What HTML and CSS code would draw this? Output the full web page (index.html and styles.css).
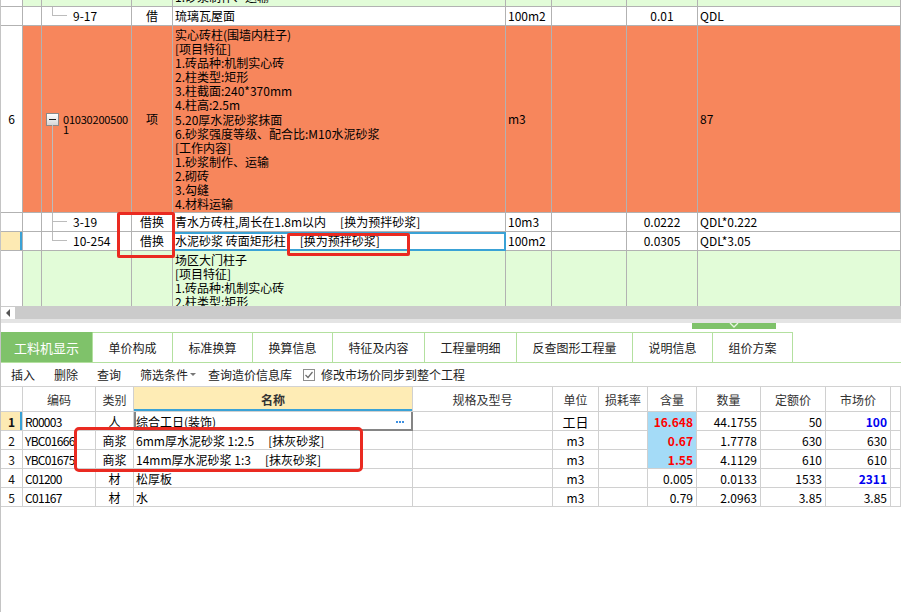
FILE: index.html
```html
<!DOCTYPE html>
<html lang="zh-CN">
<head>
<meta charset="utf-8">
<title>工料机显示</title>
<link rel="stylesheet" href="styles.css">
</head>
<body>
<div class="app">
  <div class="tree-grid">
    <div class="row r-top green">
      <div class="c c-no"></div><div class="c"></div><div class="c c-code"></div><div class="c c-type"></div><div class="c c-name">1.砂浆制作、运输</div><div class="c"></div><div class="c"></div><div class="c"></div><div class="c"></div>
    </div>
    <div class="row r-1 white">
      <div class="c c-no"></div><div class="c"></div><div class="c c-code child"><span class="elbow"></span>9-17</div><div class="c c-type">借</div><div class="c c-name">琉璃瓦屋面</div><div class="c c-unit">100m2</div><div class="c"></div><div class="c c-qty">0.01</div><div class="c c-expr">QDL</div>
    </div>
    <div class="row r-big orange">
      <div class="c c-no">6</div><div class="c"></div>
      <div class="c c-code parent"><span class="vdown"></span><span class="expand"><span class="minus"></span></span><span class="code2">01030200500<br>1</span></div>
      <div class="c c-type">项</div>
      <div class="c c-name multi">实心砖柱(围墙内柱子)<br>[项目特征]<br>1.砖品种:机制实心砖<br>2.柱类型:矩形<br>3.柱截面:240*370mm<br>4.柱高:2.5m<br>5.20厚水泥砂浆抹面<br>6.砂浆强度等级、配合比:M10水泥砂浆<br>[工作内容]<br>1.砂浆制作、运输<br>2.砌砖<br>3.勾缝<br>4.材料运输</div>
      <div class="c c-unit">m3</div><div class="c"></div><div class="c"></div><div class="c c-expr">87</div>
    </div>
    <div class="row r-1 white">
      <div class="c c-no"></div><div class="c"></div><div class="c c-code child"><span class="vfull"></span><span class="elbow"></span>3-19</div><div class="c c-type">借换</div><div class="c c-name">青水方砖柱,周长在1.8m以内<span class="gap"></span>[换为预拌砂浆]</div><div class="c c-unit">10m3</div><div class="c"></div><div class="c c-qty">0.0222</div><div class="c c-expr">QDL*0.222</div>
    </div>
    <div class="row r-1 white">
      <div class="c c-no sel-no"></div><div class="c"></div><div class="c c-code child"><span class="elbow"></span>10-254</div><div class="c c-type">借换</div><div class="c c-name sel-cell">水泥砂浆 砖面矩形柱<span class="gap"></span>[换为预拌砂浆]</div><div class="c c-unit">100m2</div><div class="c"></div><div class="c c-qty">0.0305</div><div class="c c-expr">QDL*3.05</div>
    </div>
    <div class="row r-green green">
      <div class="c c-no"></div><div class="c"></div><div class="c c-code"></div><div class="c c-type"></div>
      <div class="c c-name multi">场区大门柱子<br>[项目特征]<br>1.砖品种:机制实心砖<br>2.柱类型:矩形<br>3.柱截面:240*370mm</div>
      <div class="c"></div><div class="c"></div><div class="c"></div><div class="c"></div>
    </div>
  </div>

  <div class="hscroll"><span class="arrow-btn"><span class="tri"></span></span></div>
  <div class="splitter">
    <div class="split-band"></div>
    <div class="handle"><svg width="10" height="6" viewBox="0 0 10 6"><polyline points="1,1 5,5 9,1" fill="none" stroke="#e8f5e2" stroke-width="1.3"/></svg></div>
  </div>

  <div class="tabs">
    <div class="tab active w93">工料机显示</div>
    <div class="tab w80">单价构成</div>
    <div class="tab w80">标准换算</div>
    <div class="tab w80">换算信息</div>
    <div class="tab w92">特征及内容</div>
    <div class="tab w92">工程量明细</div>
    <div class="tab w116">反查图形工程量</div>
    <div class="tab w80">说明信息</div>
    <div class="tab w80">组价方案</div>
  </div>

  <div class="toolbar">
    <span class="tool">插入</span>
    <span class="tool">删除</span>
    <span class="tool">查询</span>
    <span class="tool dd">筛选条件<span class="caret"></span></span>
    <span class="tool">查询造价信息库</span>
    <span class="tool chk"><span class="box"><svg width="10" height="10" viewBox="0 0 10 10"><polyline points="1.5,5 4,7.5 8.5,2" fill="none" stroke="#6b6b6b" stroke-width="1.2"/></svg></span>修改市场价同步到整个工程</span>
  </div>

  <div class="lower">
    <div class="lrow lhead">
      <div class="lc"></div><div class="lc ctr">编码</div><div class="lc ctr">类别</div><div class="lc ctr h-name">名称</div><div class="lc ctr">规格及型号</div><div class="lc ctr">单位</div><div class="lc ctr">损耗率</div><div class="lc ctr">含量</div><div class="lc ctr">数量</div><div class="lc ctr">定额价</div><div class="lc ctr">市场价</div><div class="lc"></div>
    </div>
    <div class="lrow">
      <div class="lc ctr num sel-no b">1</div><div class="lc pl code">R00003</div><div class="lc ctr">人</div><div class="lc pl name-sel"><span>综合工日(装饰)</span><svg class="dots" width="8" height="2" viewBox="0 0 8 2"><rect x="0" y="0" width="2" height="2" fill="#3d8fe0"/><rect x="3" y="0" width="2" height="2" fill="#3d8fe0"/><rect x="6" y="0" width="2" height="2" fill="#3d8fe0"/></svg></div><div class="lc"></div><div class="lc ctr sans">工日</div><div class="lc"></div><div class="lc rt hl red b">16.648</div><div class="lc rt">44.1755</div><div class="lc rt">50</div><div class="lc rt blue b">100</div><div class="lc"></div>
    </div>
    <div class="lrow">
      <div class="lc ctr num">2</div><div class="lc pl code">YBC01666</div><div class="lc ctr">商浆</div><div class="lc pl">6mm厚水泥砂浆 1:2.5<span class="gap"></span>[抹灰砂浆]</div><div class="lc"></div><div class="lc ctr">m3</div><div class="lc"></div><div class="lc rt hl red b">0.67</div><div class="lc rt">1.7778</div><div class="lc rt">630</div><div class="lc rt">630</div><div class="lc"></div>
    </div>
    <div class="lrow">
      <div class="lc ctr num">3</div><div class="lc pl code">YBC01675</div><div class="lc ctr">商浆</div><div class="lc pl">14mm厚水泥砂浆 1:3<span class="gap"></span>[抹灰砂浆]</div><div class="lc"></div><div class="lc ctr">m3</div><div class="lc"></div><div class="lc rt hl hl-last red b">1.55</div><div class="lc rt">4.1129</div><div class="lc rt">610</div><div class="lc rt">610</div><div class="lc"></div>
    </div>
    <div class="lrow">
      <div class="lc ctr num">4</div><div class="lc pl code">C01200</div><div class="lc ctr">材</div><div class="lc pl">松厚板</div><div class="lc"></div><div class="lc ctr">m3</div><div class="lc"></div><div class="lc rt">0.005</div><div class="lc rt">0.0133</div><div class="lc rt">1533</div><div class="lc rt blue b">2311</div><div class="lc"></div>
    </div>
    <div class="lrow">
      <div class="lc ctr num">5</div><div class="lc pl code">C01167</div><div class="lc ctr">材</div><div class="lc pl">水</div><div class="lc"></div><div class="lc ctr">m3</div><div class="lc"></div><div class="lc rt">0.79</div><div class="lc rt">2.0963</div><div class="lc rt">3.85</div><div class="lc rt">3.85</div><div class="lc"></div>
    </div>
  </div>

  <div class="mark mark-a"></div>
  <div class="mark mark-b"></div>
  <div class="mark mark-c"></div>
</div>
</body>
</html>
```

FILE: styles.css
```css
* { box-sizing: border-box; }
html, body { margin: 0; padding: 0; background: #fff; }
body {
  font-family: "Noto Sans CJK SC", "Noto Sans", sans-serif;
  font-size: 12px;
  color: #000;
}
.app {
  position: relative;
  width: 901px;
  height: 612px;
  overflow: hidden;
  border-left: 1px solid #c4c4c4;
  display: flex;
  flex-direction: column;
}

/* ---------- upper tree grid ---------- */
.tree-grid { height: 306px; overflow: hidden; flex: none; }
.row {
  display: grid;
  grid-template-columns: 22px 19px 90px 41px 333px 46px 75px 71px 203px;
}
.c {
  position: relative;
  display: flex;
  align-items: center;
  white-space: nowrap;
  overflow: hidden;
  border-right: 1px solid #b2b2b2;
  border-bottom: 1px solid #b2b2b2;
  line-height: 14px;
}
.green .c { background: #e2fcd8; }
.orange .c { background: #f7865c; }
.white .c { background: #fff; }
.row .c-no { background: #fff; justify-content: center; }
.r-top { height: 20px; margin-top: -13px; }
.r-1 { height: 19px; }
.r-big { height: 187px; }
.r-green { height: 80px; }
.c-type { justify-content: center; }
.c-name { padding-left: 2px; }
.c-name.multi { display: block; padding-top: 2px; white-space: normal; line-height: 14.1px; }
.c-unit { padding-left: 2px; }
.c-qty { justify-content: center; }
.c-expr { padding-left: 2px; }
.gap { display: inline-block; width: 14px; }

.c-code.child { padding-left: 31px; }
.c-code.parent { padding-left: 4px; }
.elbow {
  position: absolute; left: 10px; top: 0;
  width: 15px; height: 50%;
  border-left: 1px solid #bcbcbc;
  border-bottom: 1px solid #bcbcbc;
}
.vfull { position: absolute; left: 10px; top: 0; bottom: 0; border-left: 1px solid #bcbcbc; }
.vdown { position: absolute; left: 10px; top: calc(50% + 6px); bottom: 0; border-left: 1px solid #bcbcbc; }
.expand {
  flex: none;
  width: 13px; height: 13px;
  border: 1px solid #8a8a8a;
  background: linear-gradient(#ffffff, #d6d6d6);
  display: flex; align-items: center; justify-content: center;
  margin-right: 4px;
}
.minus { width: 7px; height: 1px; background: #202020; }
.code2 { font-size: 11px; line-height: 10px; margin-top: 10px; letter-spacing: -0.2px; }

.sel-no { background: #fdeab3 !important; box-shadow: inset -2px 0 0 #3aa2d6; }
.sel-cell { outline: 2px solid #3aa2d6; outline-offset: -2px; }

/* ---------- scrollbar & splitter ---------- */
.hscroll { height: 13px; flex: none; background: #cbcbcb; display: flex; align-items: flex-end; }
.arrow-btn {
  width: 14px; height: 12px; background: #fff;
  display: flex; align-items: center; justify-content: center;
}
.tri {
  width: 0; height: 0;
  border-top: 4px solid transparent;
  border-bottom: 4px solid transparent;
  border-right: 4px solid #555;
}
.splitter { height: 13px; flex: none; }
.split-band { height: 4px; background: #e4e4e4; }
.handle {
  margin-left: 691px; width: 84px; height: 6px;
  background: #7fc26a;
  display: flex; justify-content: center; align-items: flex-start;
}
.handle svg { display: block; margin-top: -1px; }

/* ---------- tabs ---------- */
.tabs { flex: none; display: flex; height: 31px; border-bottom: 1px solid #b3e09f; }
.tab {
  height: 30px;
  border-top: 1px solid #b3e09f;
  border-right: 1px solid #b3e09f;
  display: flex; align-items: center; justify-content: center;
  color: #222;
  font-size: 12px;
}
.tab.active { background: #7fc26a; border-top-color: #7fc26a; color: #fff; font-size: 13px; }
.w93 { width: 92px; }
.w80 { width: 80px; }
.w92 { width: 92px; }
.w116 { width: 116px; }

/* ---------- toolbar ---------- */
.toolbar {
  flex: none;
  height: 24px;
  border-bottom: 1px solid #d2d2d2;
  display: flex; align-items: center;
  padding-left: 10px;
  gap: 19px;
  color: #222;
}
.tool { display: inline-flex; align-items: center; }
.dd { margin-right: -7px; }
.caret {
  display: inline-block; margin-left: 2px; width: 0; height: 0;
  border-left: 3px solid transparent; border-right: 3px solid transparent;
  border-top: 3px solid #777;
}
.chk { margin-left: -8px; }
.chk .box {
  width: 12px; height: 12px; border: 1px solid #8e8e8e; background: #fff;
  display: inline-flex; align-items: center; justify-content: center;
  margin-right: 6px;
}
.chk svg { display: block; }

/* ---------- lower grid ---------- */
.lower { flex: 1; }
.lrow {
  display: grid;
  grid-template-columns: 22px 73px 38px 279px 140px 46px 49px 49px 64px 65px 65px 10px;
  height: 19px;
}
.lrow.lhead { height: 25px; color: #333; }
.lc {
  position: relative;
  display: flex; align-items: center;
  white-space: nowrap; overflow: hidden;
  border-right: 1px solid #d0d0d0;
  border-bottom: 1px solid #d0d0d0;
}
.ctr { justify-content: center; }
.rt { justify-content: flex-end; padding-right: 3px; }
.pl { padding-left: 2px; }
.code { letter-spacing: -0.7px; }
.num { color: #111; }
.b { font-weight: 700; }
.h-name { background: #feecb5; font-weight: 700; box-shadow: inset 0 -2px 0 #3aa2d6; }
.name-sel {
  justify-content: space-between;
  padding-right: 8px;
  border-right-color: #858585;
  border-bottom-color: #858585;
  box-shadow: inset 2px 0 0 #858585, inset -1px 0 0 #858585, inset 0 -1px 0 #858585;
}
.dots { display: block; flex: none; margin-top: 1px; }
.hl { background: #a4dbf7; border-bottom-color: #a4dbf7; }
.hl-last { border-bottom-color: #d0d0d0; }
.red { color: #f00; }
.blue { color: #0000f0; }
.sans { font-size: 13px; }

/* ---------- annotation marks ---------- */
.mark { position: absolute; border: 3px solid #ea2a21; border-radius: 2px; }
.mark-a { left: 116px; top: 212px; width: 58px; height: 46px; }
.mark-b { left: 286px; top: 233px; width: 123px; height: 23px; }
.mark-c { left: 73px; top: 427px; width: 289px; height: 45px; border-radius: 5px; }
```
